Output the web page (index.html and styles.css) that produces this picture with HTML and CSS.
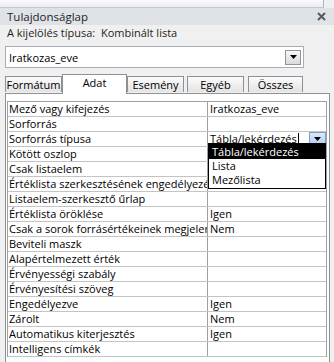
FILE: index.html
```html
<!DOCTYPE html>
<html lang="hu">
<head>
    <meta charset="UTF-8">
    <title>Tulajdonságlap</title>
    <link rel="stylesheet" href="styles.css">
</head>
<body>
    <div class="ablak">
        <div class="felso-sav"></div>
        <div class="cimsor">
            <span>Tulajdonságlap</span>
            <svg class="bezar" width="9" height="9" viewBox="0 0 9 9">
                <path d="M1 1 L8 8 M8 1 L1 8" stroke="#5a5a5a" stroke-width="2"/>
            </svg>
        </div>
        <div class="kijeloles">A kijelölés típusa:&nbsp;&nbsp;Kombinált lista</div>
        <div class="kombi">
            <span>Iratkozas_eve</span>
            <span class="kombi-gomb">
                <svg width="7" height="4" viewBox="0 0 7 4"><path d="M0 0 H7 L3.5 4 Z" fill="#000"/></svg>
            </span>
        </div>
        <div class="fulek">
            <div class="ful">Formátum</div>
            <div class="ful aktiv">Adat</div>
            <div class="ful">Esemény</div>
            <div class="ful ful-tav">Egyéb</div>
            <div class="ful ful-tav2">Összes</div>
        </div>
        <div class="panel">
            <div class="racs">
                <div class="sor"><div class="nev">Mező vagy kifejezés</div><div class="ertek">Iratkozas_eve</div></div>
                <div class="sor"><div class="nev">Sorforrás</div><div class="ertek"></div></div>
                <div class="sor"><div class="nev">Sorforrás típusa</div><div class="ertek szerkeszt"><span>Tábla/lekérdezés</span><span class="kurzor"></span><span class="lenyilo"><svg width="7" height="4" viewBox="0 0 7 4"><path d="M0 0 H7 L3.5 4 Z" fill="#000"/></svg></span></div></div>
                <div class="sor"><div class="nev">Kötött oszlop</div><div class="ertek"></div></div>
                <div class="sor"><div class="nev">Csak listaelem</div><div class="ertek"></div></div>
                <div class="sor"><div class="nev">Értéklista szerkesztésének engedélyezése</div><div class="ertek"></div></div>
                <div class="sor"><div class="nev">Listaelem-szerkesztő űrlap</div><div class="ertek"></div></div>
                <div class="sor"><div class="nev">Értéklista öröklése</div><div class="ertek">Igen</div></div>
                <div class="sor"><div class="nev">Csak a sorok forrásértékeinek megjelenítése</div><div class="ertek">Nem</div></div>
                <div class="sor"><div class="nev">Beviteli maszk</div><div class="ertek"></div></div>
                <div class="sor"><div class="nev">Alapértelmezett érték</div><div class="ertek"></div></div>
                <div class="sor"><div class="nev">Érvényességi szabály</div><div class="ertek"></div></div>
                <div class="sor"><div class="nev">Érvényesítési szöveg</div><div class="ertek"></div></div>
                <div class="sor"><div class="nev">Engedélyezve</div><div class="ertek">Igen</div></div>
                <div class="sor"><div class="nev">Zárolt</div><div class="ertek">Nem</div></div>
                <div class="sor"><div class="nev">Automatikus kiterjesztés</div><div class="ertek">Igen</div></div>
                <div class="sor"><div class="nev">Intelligens címkék</div><div class="ertek"></div></div>
            </div>
        </div>
        <div class="lista">
            <div class="lista-elem kijelolt">Tábla/lekérdezés</div>
            <div class="lista-elem">Lista</div>
            <div class="lista-elem">Mezőlista</div>
        </div>
    </div>
</body>
</html>
```

FILE: styles.css
```css
body {
    margin: 0;
    font-family: "Open Sans", "Noto Sans", sans-serif;
    font-size: 11px;
    color: #000;
    background: #f4f4f6;
}
.ablak {
    position: relative;
    width: 334px;
    height: 362px;
    overflow: hidden;
    background: #f0f0f0;
}
.felso-sav {
    height: 7px;
    background: linear-gradient(#fbfafd, #eeebf4);
    border-bottom: 1px solid #c6c8cf;
    border-right: 1px solid #b7b2c8;
    width: 323px;
}
.cimsor {
    height: 17px;
    background: #dfe2e7;
    display: flex;
    align-items: center;
    justify-content: space-between;
    padding: 0 8px 0 7px;
    color: #1e1e1e;
    font-size: 11.5px;
}
.kijeloles {
    height: 16px;
    line-height: 16px;
    padding-left: 7px;
    color: #1e1e1e;
}
.kombi {
    margin: 5px 30px 0 5px;
    height: 20px;
    background: #fff;
    border: 1px solid #a7adb6;
    display: flex;
    align-items: center;
    justify-content: space-between;
    padding-left: 3px;
}
.kombi-gomb {
    width: 14px;
    height: 13px;
    margin-right: 2px;
    border: 1px solid #8f939b;
    background: linear-gradient(#f8f8f8, #dadada);
    display: flex;
    align-items: center;
    justify-content: center;
}
.fulek {
    display: flex;
    align-items: flex-end;
    height: 20px;
    margin-top: 5px;
    padding-left: 5px;
    position: relative;
    z-index: 1;
}
.ful {
    width: 55px;
    height: 15px;
    line-height: 15px;
    text-align: center;
    border: 1px solid #8c9097;
    border-bottom: none;
    background: linear-gradient(#fbfbfb, #e3e3e3);
    margin-bottom: 1px;
}
.ful.aktiv {
    width: 63px;
    height: 19px;
    line-height: 15px;
    background: #fff;
    margin-bottom: -1px;
    border-color: #8c9097;
}
.ful-tav {
    margin-left: 3px;
}
.ful-tav2 {
    margin-left: 4px;
    width: 53px;
}
.panel {
    margin: 0 4px 0 5px;
    border: 1px solid #8c9097;
    background: #fff;
    height: 280px;
    padding: 7px 2px 0 1px;
}
.racs {
    border: 1px solid #a0a0a0;
    border-bottom: none;
}
.sor {
    display: grid;
    grid-template-columns: 199px 1fr;
    height: 14px;
    border-bottom: 1px solid #c4c4c4;
    line-height: 14px;
}
.nev {
    padding-left: 1px;
    white-space: nowrap;
    overflow: hidden;
}
.ertek {
    border-left: 1px solid #a0a0a0;
    padding-left: 2px;
    white-space: nowrap;
    overflow: hidden;
    display: flex;
    align-items: center;
}
.kurzor {
    width: 1px;
    height: 12px;
    background: #000;
    margin-left: 1px;
}
.lenyilo {
    margin-left: auto;
    width: 15px;
    height: 12px;
    background: linear-gradient(#dbe8f8, #b4cdee);
    border: 1px solid #7f9dc6;
    display: flex;
    align-items: center;
    justify-content: center;
}
.lista {
    position: absolute;
    left: 208px;
    top: 143px;
    width: 116px;
    border: 1px solid #000;
    background: #fff;
    z-index: 2;
    padding-bottom: 1px;
}
.lista-elem {
    height: 14px;
    line-height: 14px;
    padding-left: 3px;
}
.lista-elem.kijelolt {
    background: #000;
    color: #fff;
    height: 15px;
    line-height: 15px;
}
```
